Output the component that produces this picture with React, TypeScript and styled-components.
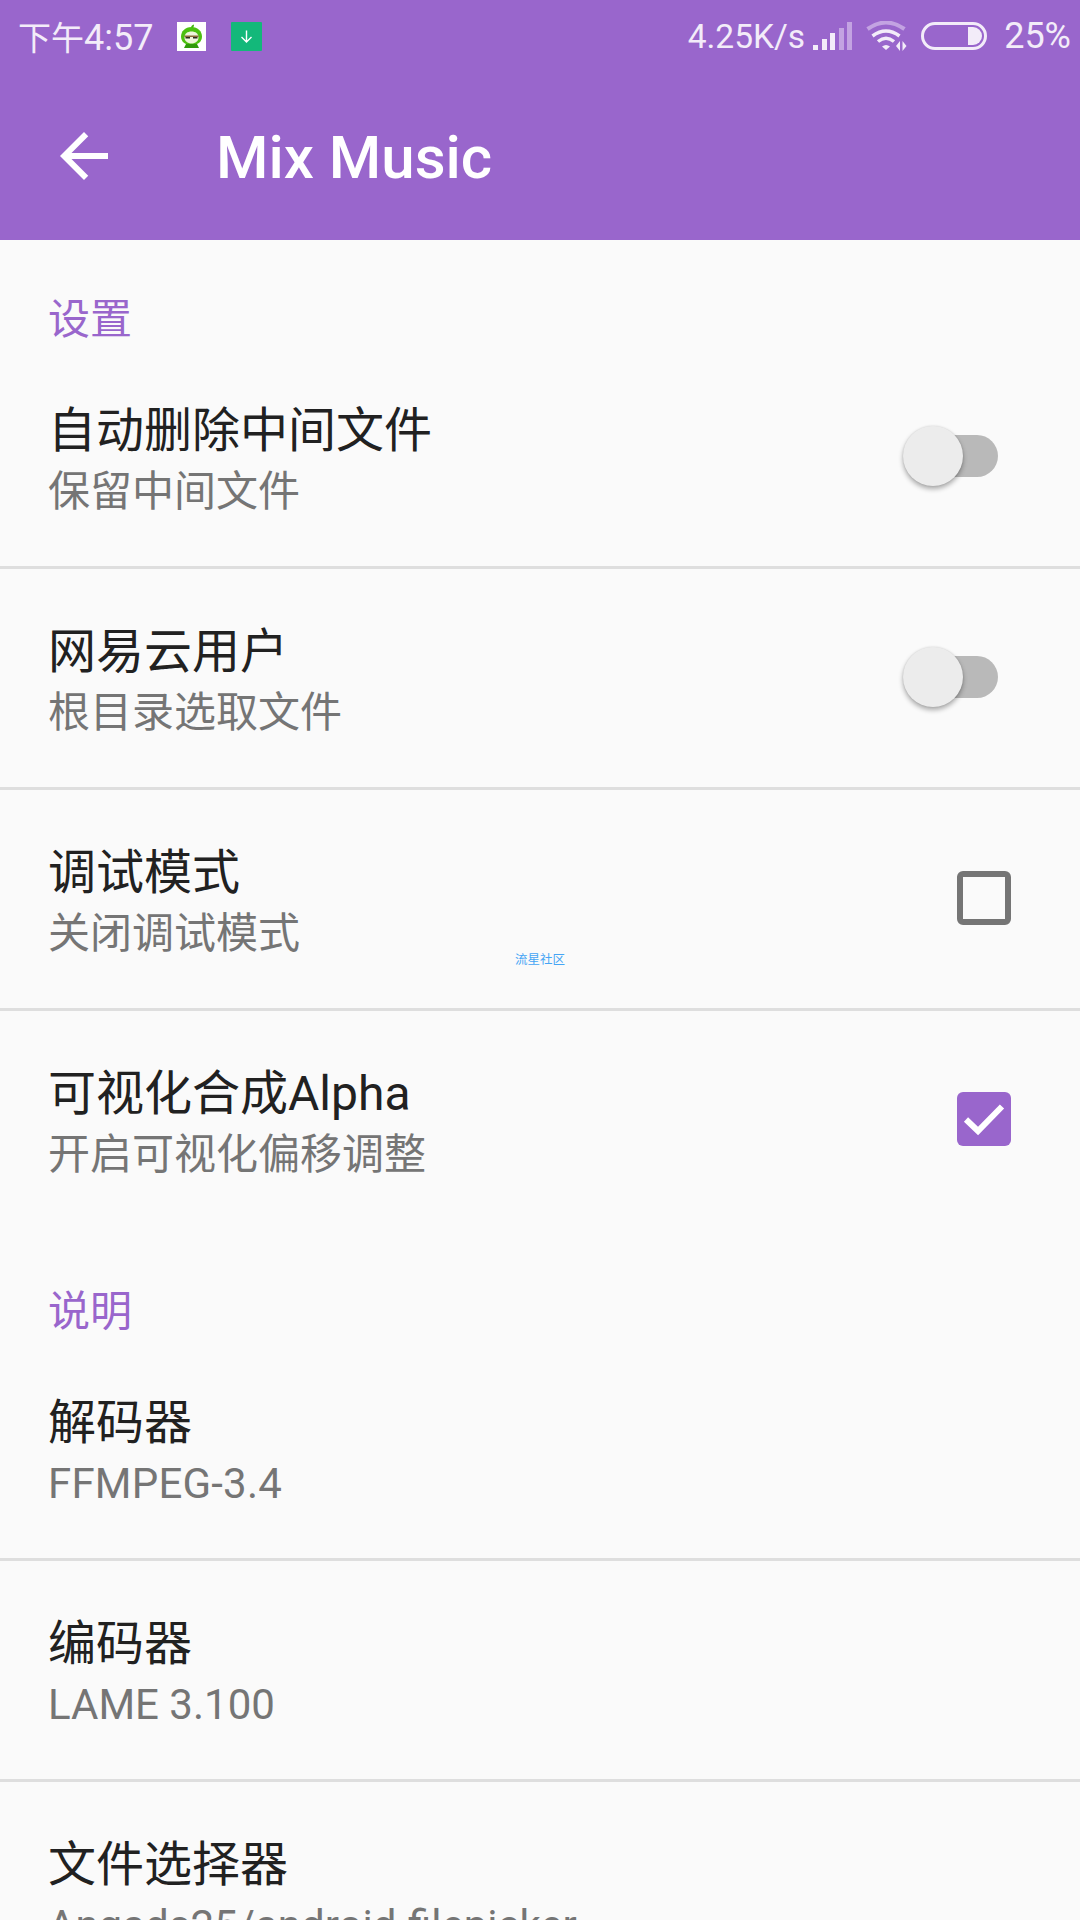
import styled, { createGlobalStyle } from 'styled-components';

const Global = createGlobalStyle`
  html, body {
    margin: 0;
    padding: 0;
    background: #fafafa;
  }
  body {
    font-family: Roboto, "Noto Sans CJK SC", sans-serif;
  }
`;

const Page = styled.div`
  position: relative;
  width: 1080px;
  height: 1920px;
  overflow: hidden;
  background: #fafafa;
`;

const Top = styled.header`
  height: 240px;
  background: #9966cc;
  display: flex;
  flex-direction: column;
`;

const StatusBar = styled.div`
  height: 72px;
  display: flex;
  align-items: center;
  color: #f3ecf9;
`;

const Time = styled.span`
  font-size: 36px;
  margin-left: 18px;
  width: 159px;
`;

const TimeCjk = styled.span`
  font-size: 33px;
`;

const Notif = styled.svg`
  display: block;
  margin-right: 25px;
  flex: none;
`;

const StatusRight = styled.div`
  margin-left: auto;
  display: flex;
  align-items: center;
  padding-right: 9px;
`;

const Speed = styled.span`
  font-size: 33.5px;
  margin-right: 8px;
`;

const Percent = styled.span`
  font-size: 36px;
  margin-left: 17px;
`;

const StatusIcon = styled.svg<{ $gap?: number }>`
  display: block;
  flex: none;
  margin-right: ${(p) => p.$gap ?? 0}px;
`;

const AppBar = styled.div`
  flex: 1;
  display: flex;
  align-items: center;
  padding-left: 48px;
  color: #fff;
`;

const Title = styled.h1`
  margin: 3px 0 0 96px;
  font-size: 60px;
  font-weight: 500;
  line-height: 72px;
`;

const SectionTitle = styled.div`
  padding: 52px 0 0 48px;
  font-size: 42px;
  line-height: 56px;
  color: #9966cc;
`;

const Row = styled.div<{ $last?: boolean }>`
  box-sizing: border-box;
  height: 221px;
  padding: 53px 69px 0 48px;
  display: flex;
  justify-content: space-between;
  border-bottom: 3px solid ${(p) => (p.$last ? 'transparent' : '#dedede')};
`;

const Texts = styled.div`
  display: flex;
  flex-direction: column;
`;

const ItemTitle = styled.div`
  font-size: 48px;
  line-height: 60px;
  color: #212121;
`;

const ItemSub = styled.div<{ $spaced?: boolean }>`
  font-size: 42px;
  line-height: 61px;
  color: #757575;
  white-space: nowrap;
  letter-spacing: ${(p) => (p.$spaced ? '0.2px' : '0')};
`;

const Control = styled.div`
  align-self: center;
  margin-top: -55px;
`;

const Switch = styled.div`
  position: relative;
  width: 95px;
  height: 60px;
  margin-right: 13px;
  display: flex;
  align-items: center;
  justify-content: flex-end;
`;

const Track = styled.div`
  width: 85px;
  height: 42px;
  border-radius: 21px;
  background: #b9b9b9;
`;

const Thumb = styled.div`
  position: absolute;
  left: 0;
  top: 0;
  width: 60px;
  height: 60px;
  border-radius: 50%;
  background: #ececec;
  box-shadow: 0 3px 5px rgba(0, 0, 0, 0.32), 0 0 2px rgba(0, 0, 0, 0.12);
`;

const Box = styled.div<{ $on?: boolean }>`
  box-sizing: border-box;
  width: 54px;
  height: 54px;
  border-radius: 6px;
  border: ${(p) => (p.$on ? 'none' : '6px solid #757575')};
  background: ${(p) => (p.$on ? '#9966cc' : 'transparent')};
`;

const Watermark = styled.div`
  position: absolute;
  left: 515px;
  top: 952px;
  font-size: 12.5px;
  line-height: 16px;
  color: #45a5f5;
`;

function Toggle() {
  return (
    <Switch>
      <Track />
      <Thumb />
    </Switch>
  );
}

function Check({ on }: { on?: boolean }) {
  return (
    <Box $on={on}>
      {on && (
        <svg width="54" height="54" viewBox="0 0 54 54">
          <path d="M9 27.5 L21 39 L45 14.5" fill="none" stroke="#fff" strokeWidth="6" />
        </svg>
      )}
    </Box>
  );
}

type Item = {
  title: string;
  sub: string;
  control?: 'switch' | 'off' | 'on';
  last?: boolean;
  spaced?: boolean;
};

const settings: Item[] = [
  { title: '自动删除中间文件', sub: '保留中间文件', control: 'switch' },
  { title: '网易云用户', sub: '根目录选取文件', control: 'switch' },
  { title: '调试模式', sub: '关闭调试模式', control: 'off' },
  { title: '可视化合成Alpha', sub: '开启可视化偏移调整', control: 'on', last: true },
];

const about: Item[] = [
  { title: '解码器', sub: 'FFMPEG-3.4', spaced: true },
  { title: '编码器', sub: 'LAME 3.100' },
  { title: '文件选择器', sub: 'Angads25/android-filepicker' },
];

function ListRow({ item }: { item: Item }) {
  return (
    <Row $last={item.last}>
      <Texts>
        <ItemTitle>{item.title}</ItemTitle>
        <ItemSub $spaced={item.spaced}>{item.sub}</ItemSub>
      </Texts>
      {item.control && (
        <Control>
          {item.control === 'switch' ? <Toggle /> : <Check on={item.control === 'on'} />}
        </Control>
      )}
    </Row>
  );
}

export default function App() {
  return (
    <Page>
      <Global />
      <Top>
        <StatusBar>
          <Time>
            <TimeCjk>下午</TimeCjk>4:57
          </Time>
          <Notif width="29" height="29" viewBox="0 0 29 29">
            <rect width="29" height="29" fill="#fff" />
            <path d="M14 6 C14 4 15 3 17 2.5 C17 4 16.5 5 16 6Z" fill="#3fb30c" />
            <path d="M14.5 5 C8 5 4 9.5 4 14.5 C4 18.5 6.5 21 9 22 H20 C22.5 21 25 18.5 25 14.5 C25 9.5 21 5 14.5 5Z" fill="#4cc010" />
            <path d="M14.5 9.5 C10.5 9.5 7.5 11.5 7.5 15.5 C7.5 19 10.5 21.5 14.5 21.5 C18.5 21.5 21.5 19 21.5 15.5 C21.5 11.5 18.5 9.5 14.5 9.5Z" fill="#eef5dc" />
            <rect x="7.5" y="13.5" width="14" height="1.5" fill="#8a6a3a" />
            <path d="M8.5 15 H13 V16.5 H8.5Z M16 15 H20.5 V16.5 H16Z" fill="#2c2c1c" />
            <path d="M9 22 H20 L22 26 H7Z" fill="#2f9a0a" />
          </Notif>
          <Notif width="31" height="29" viewBox="0 0 31 29">
            <rect width="31" height="29" rx="1" fill="#13b87a" />
            <path d="M15.5 8.5 V20 M10.5 15 L15.5 20 L20.5 15" fill="none" stroke="#fff" strokeWidth="1.4" />
          </Notif>
          <StatusRight>
            <Speed>4.25K/s</Speed>
            <StatusIcon $gap={14} width="39" height="28" viewBox="0 0 39 28">
              <rect x="0" y="23" width="5" height="5" fill="#f3ecf9" />
              <rect x="9" y="17" width="5" height="11" fill="#f3ecf9" />
              <rect x="17" y="11" width="5" height="17" fill="#f3ecf9" />
              <rect x="26" y="6" width="5" height="22" fill="#c3a3e2" />
              <rect x="34" y="0" width="5" height="28" fill="#c3a3e2" />
            </StatusIcon>
            <StatusIcon $gap={14} width="41" height="30" viewBox="0 0 41 30">
              <path d="M1.5 8 Q20 -5 38.5 8" fill="none" stroke="#c3a3e2" strokeWidth="4" />
              <path d="M6.5 15 Q20 5 33.5 15" fill="none" stroke="#f3ecf9" strokeWidth="3.5" />
              <path d="M12 20.5 Q20 14 28 20.5" fill="none" stroke="#f3ecf9" strokeWidth="3.5" />
              <path d="M16 25.5 Q20 22.5 24 25.5 L20 29Z" fill="#f3ecf9" />
              <path d="M34 20 V30 L30 25Z M36.5 20 V30 L40.5 25Z" fill="#f3ecf9" />
            </StatusIcon>
            <StatusIcon width="66" height="28" viewBox="0 0 66 28">
              <rect x="1.5" y="1.5" width="63" height="25" rx="12.5" fill="none" stroke="#f3ecf9" strokeWidth="3" />
              <path d="M47 5 H52 A9 9 0 0 1 52 23 H47Z" fill="#f3ecf9" />
            </StatusIcon>
            <Percent>25%</Percent>
          </StatusRight>
        </StatusBar>
        <AppBar>
          <svg width="72" height="72" viewBox="0 0 24 24" fill="#fff">
            <path d="M20 11H7.83l5.59-5.59L12 4l-8 8 8 8 1.41-1.41L7.83 13H20v-2z" />
          </svg>
          <Title>Mix Music</Title>
        </AppBar>
      </Top>
      <SectionTitle>设置</SectionTitle>
      {settings.map((item) => (
        <ListRow key={item.title} item={item} />
      ))}
      <SectionTitle>说明</SectionTitle>
      {about.map((item) => (
        <ListRow key={item.title} item={item} />
      ))}
      <Watermark>流星社区</Watermark>
    </Page>
  );
}
